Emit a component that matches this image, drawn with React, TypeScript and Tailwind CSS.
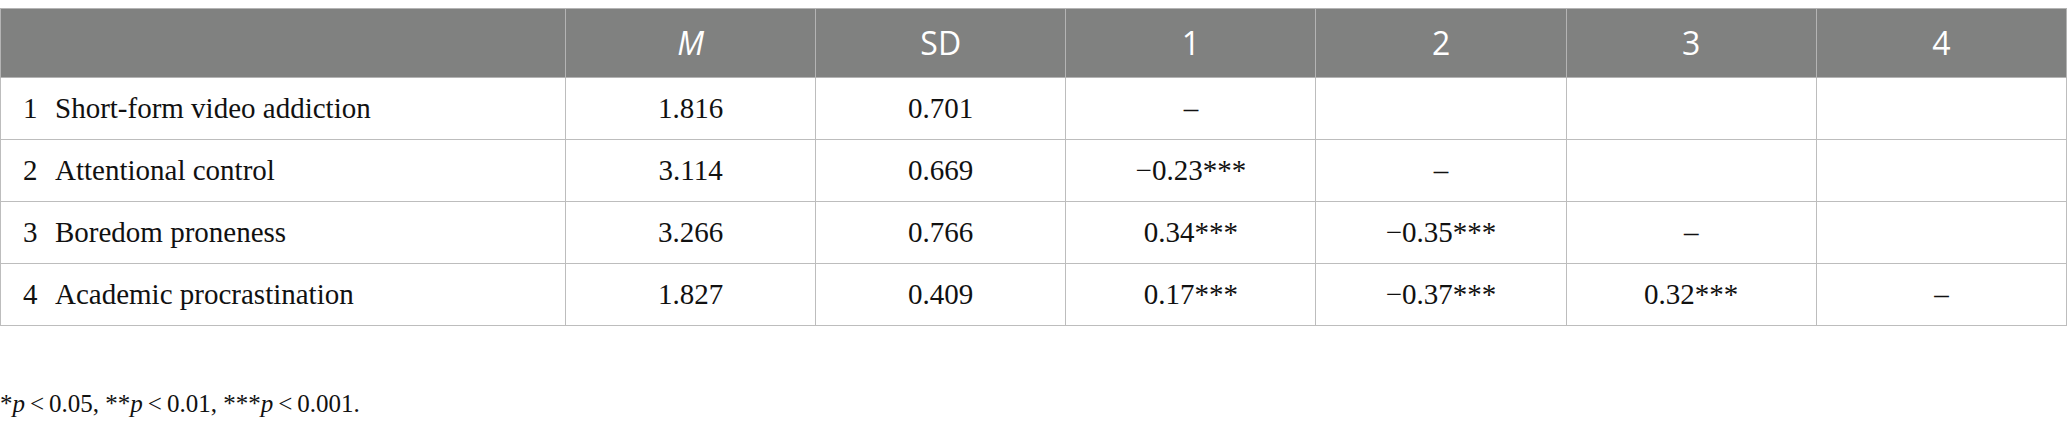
import type { ReactNode } from "react";

type Row = {
  idx: number;
  label: string;
  mean: string;
  sd: string;
  cells: string[];
};

const rows: Row[] = [
  { idx: 1, label: "Short-form video addiction", mean: "1.816", sd: "0.701", cells: ["–", "", "", ""] },
  { idx: 2, label: "Attentional control", mean: "3.114", sd: "0.669", cells: ["−0.23***", "–", "", ""] },
  { idx: 3, label: "Boredom proneness", mean: "3.266", sd: "0.766", cells: ["0.34***", "−0.35***", "–", ""] },
  { idx: 4, label: "Academic procrastination", mean: "1.827", sd: "0.409", cells: ["0.17***", "−0.37***", "0.32***", "–"] },
];

const Th = ({ children }: { children?: ReactNode }) => (
  <th className="border border-[#b4b4b4] text-center align-middle font-normal text-[32px] text-white">{children}</th>
);

const Td = ({ children }: { children?: ReactNode }) => (
  <td className="border border-[#bdbdbd] text-center align-middle">{children}</td>
);

export default function App() {
  return (
    <div className="w-[2067px] h-[433px] bg-white pt-2">
      <table className="w-[2067px] table-fixed border-collapse [font-family:'Liberation_Serif','Times_New_Roman',serif] text-[29px] text-[#111]">
        <colgroup>
          <col className="w-[565px]" />
          <col />
          <col />
          <col />
          <col />
          <col />
          <col />
        </colgroup>
        <thead>
          <tr className="h-[69px] bg-[#808180] [font-family:'Open_Sans','Noto_Sans',sans-serif]">
            <Th />
            <Th>
              <span className="italic">M</span>
            </Th>
            <Th>SD</Th>
            <Th>1</Th>
            <Th>2</Th>
            <Th>3</Th>
            <Th>4</Th>
          </tr>
        </thead>
        <tbody>
          {rows.map((r) => (
            <tr key={r.idx} className="h-[62px]">
              <td className="border border-[#bdbdbd] pl-[22px] align-middle">
                <span className="inline-block w-[32px]">{r.idx}</span>
                {r.label}
              </td>
              <Td>{r.mean}</Td>
              <Td>{r.sd}</Td>
              {r.cells.map((c, i) => (
                <Td key={i}>{c}</Td>
              ))}
            </tr>
          ))}
        </tbody>
      </table>
      <p className="mt-[64px] [font-family:'Liberation_Serif','Times_New_Roman',serif] text-[25px] leading-[28px] text-[#111]">
        *<span className="italic">p</span>&#8201;&lt;&#8201;0.05, **<span className="italic">p</span>&#8201;&lt;&#8201;0.01, ***
        <span className="italic">p</span>&#8201;&lt;&#8201;0.001.
      </p>
    </div>
  );
}
